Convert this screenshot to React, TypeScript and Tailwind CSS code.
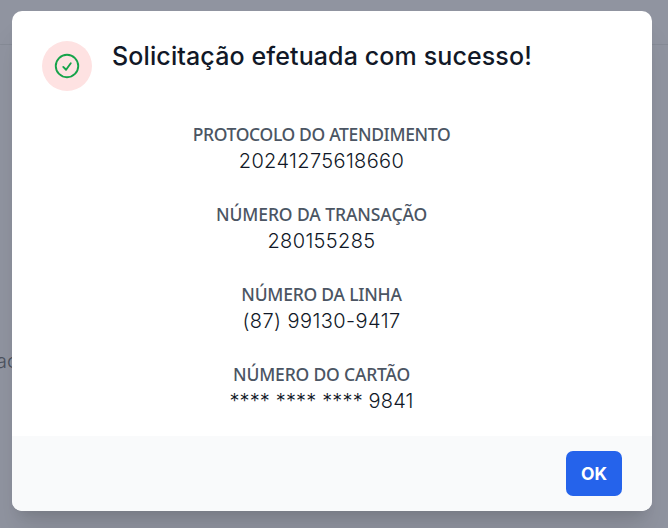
interface Detail {
  label: string;
  value: string;
  labelTracking: string;
  valueTracking: string;
}

const details: Detail[] = [
  {
    label: "PROTOCOLO DO ATENDIMENTO",
    value: "20241275618660",
    labelTracking: "tracking-[-0.35px]",
    valueTracking: "tracking-[0.36px]",
  },
  {
    label: "NÚMERO DA TRANSAÇÃO",
    value: "280155285",
    labelTracking: "tracking-[-0.08px]",
    valueTracking: "tracking-[0.36px]",
  },
  {
    label: "NÚMERO DA LINHA",
    value: "(87) 99130-9417",
    labelTracking: "tracking-[-0.22px]",
    valueTracking: "tracking-[0.42px]",
  },
  {
    label: "NÚMERO DO CARTÃO",
    value: "**** **** **** 9841",
    labelTracking: "tracking-[-0.18px]",
    valueTracking: "tracking-[0.15px]",
  },
];

function SuccessIcon() {
  return (
    <div className="flex size-[50px] shrink-0 items-center justify-center rounded-full bg-[#fee2e2]">
      <svg
        className="size-[30px] text-[#16a34a]"
        viewBox="0 0 24 24"
        fill="none"
        stroke="currentColor"
        strokeWidth={1.5}
        strokeLinecap="round"
        strokeLinejoin="round"
      >
        <path d="M9 12.75 11.25 15 15 9.75M21 12a9 9 0 1 1-18 0 9 9 0 0 1 18 0Z" />
      </svg>
    </div>
  );
}

function DetailItem({
  label,
  value,
  labelTracking,
  valueTracking,
}: Detail) {
  return (
    <div className="text-center">
      <dt
        className={`font-['Noto_Sans',sans-serif] text-[17.5px] leading-[25px] font-medium text-[#4b5563] ${labelTracking}`}
      >
        {label}
      </dt>

      <dd
        className={`text-[20px] leading-7 font-light text-[#111827] ${valueTracking}`}
      >
        {value}
      </dd>
    </div>
  );
}

export default function App() {
  return (
    <div className="relative h-screen overflow-hidden bg-[#9094a0] px-3 pt-[11px] font-['Inter',sans-serif]">
      <div className="absolute inset-x-0 top-[44px] border-t border-[#868b96]" />

      <span className="absolute top-[347px] -left-1 text-[20px] leading-7 font-light text-[#4c525e]">
        ac
      </span>

      <div className="relative flex h-[500px] w-[640px] flex-col overflow-hidden rounded-[10px] bg-white shadow-[0_25px_31px_-6px_rgb(0_0_0/0.1),0_10px_12px_-7px_rgb(0_0_0/0.1)]">
        <div className="flex-1 px-[30px] pt-[30px]">
          <div className="flex gap-5">
            <SuccessIcon />

            <h3 className="text-[25px] leading-[30px] font-medium tracking-[0.12px] text-[#111827]">
              Solicitação efetuada com sucesso!
            </h3>
          </div>

          <dl className="mt-[31px] mr-[21px] flex flex-col gap-[27px]">
            {details.map((detail) => (
              <DetailItem key={detail.label} {...detail} />
            ))}
          </dl>
        </div>

        <div className="flex h-[75px] items-center justify-end bg-[#f9fafb] px-[30px]">
          <button className="h-[45px] w-14 rounded-[7px] bg-[#2563eb] pt-px text-[17.5px] font-bold text-white">
            OK
          </button>
        </div>
      </div>
    </div>
  );
}
